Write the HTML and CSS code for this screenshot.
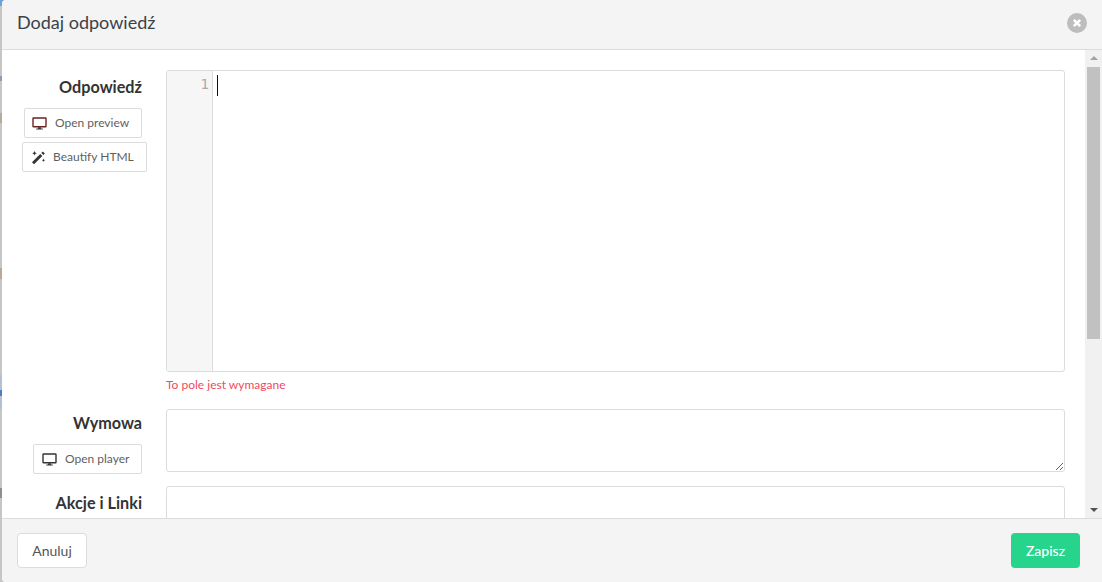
FILE: index.html
```html
<!DOCTYPE html>
<html lang="pl">
<head>
<meta charset="utf-8">
<title>Dodaj odpowiedź</title>
<link rel="stylesheet" href="styles.css">
</head>
<body>
<div class="modal">
  <header class="modal-head">
    <h1 class="modal-title">Dodaj odpowiedź</h1>
    <button class="close" aria-label="Zamknij">
      <svg width="20" height="20" viewBox="0 0 20 20"><circle cx="10" cy="10" r="10" fill="#bdbdbd"/><path d="M6.800 6.800l6.400 6.400M13.200 6.800l-6.400 6.400" stroke="#fff" stroke-width="2.600"/></svg>
    </button>
  </header>
  <div class="modal-main">
    <div class="modal-body">
      <div class="form-row row-answer">
        <div class="side">
          <label class="label">Odpowiedź</label>
          <button class="tool tool-preview">
            <svg class="ico" width="15" height="13" viewBox="0 0 16 14"><path d="M1.600 1h12.800a.6.6 0 0 1 .6.6v8.300a.6.6 0 0 1-.6.6H1.600a.6.6 0 0 1-.6-.6V1.600a.6.6 0 0 1 .6-.6z" fill="none" stroke="#6b2222" stroke-width="1.500"/><path d="M6.500 11h3v1.500h2V13.500H4.500V12.500h2z" fill="#333"/></svg>
            <span>Open preview</span>
          </button>
          <button class="tool tool-beautify">
            <svg class="ico" width="15" height="14" viewBox="0 0 15 14"><path d="M1 12.300L9.300 4l2 2L3 14.300z" fill="#333"/><path d="M10.300 3L11.800 1.500l2 2L12.300 5z" fill="#333"/><path d="M3.500 1l.7 1.600 1.600.7-1.600.7L3.500 5.600 2.800 4l-1.600-.7 1.600-.7zM12.500 8.500l.5 1.200 1.200.5-1.200.5-.5 1.200-.5-1.200-1.200-.5 1.200-.5z" fill="#333"/></svg>
            <span>Beautify HTML</span>
          </button>
        </div>
        <div class="field">
          <div class="editor">
            <div class="gutter">1</div>
            <div class="code"><span class="caret"></span></div>
          </div>
          <div class="error">To pole jest wymagane</div>
        </div>
      </div>
      <div class="form-row row-speech">
        <div class="side">
          <label class="label">Wymowa</label>
          <button class="tool tool-player">
            <svg class="ico" width="15" height="13" viewBox="0 0 16 14"><path d="M1.600 1h12.800a.6.6 0 0 1 .6.6v8.300a.6.6 0 0 1-.6.6H1.600a.6.6 0 0 1-.6-.6V1.600a.6.6 0 0 1 .6-.6z" fill="none" stroke="#333" stroke-width="1.500"/><path d="M6.500 11h3v1.500h2V13.500H4.500V12.500h2z" fill="#333"/></svg>
            <span>Open player</span>
          </button>
        </div>
        <div class="field">
          <textarea class="textarea"></textarea>
        </div>
      </div>
      <div class="form-row row-links">
        <div class="side">
          <label class="label">Akcje i Linki</label>
        </div>
        <div class="field">
          <div class="links-box"></div>
        </div>
      </div>
    </div>
    <div class="scrollbar">
      <div class="arrow-up"></div>
      <div class="track"><div class="thumb"></div></div>
      <div class="arrow-down"></div>
    </div>
  </div>
  <footer class="modal-foot">
    <button class="btn btn-cancel">Anuluj</button>
    <button class="btn btn-save">Zapisz</button>
  </footer>
</div>
</body>
</html>
```
FILE: styles.css
```css
* { box-sizing: border-box; }
html, body { margin: 0; height: 100%; overflow: hidden; }
body {
  background: linear-gradient(to bottom,
    #6fa3d8 0, #6fa3d8 6px, #c6c6c6 6px, #c6c6c6 76px,
    #8d9cb0 76px, #8d9cb0 81px, #c6c6c6 81px, #c6c6c6 113px,
    #b3aa98 113px, #b3aa98 123px, #c6c6c6 123px, #c6c6c6 268px,
    #b8a898 268px, #b8a898 279px, #c6c6c6 279px, #c6c6c6 375px,
    #b4bfd0 375px, #b4bfd0 390px, #4d7fc0 390px, #4d7fc0 396px,
    #b4bfd0 396px, #b4bfd0 409px, #c6c6c6 409px, #c6c6c6 488px,
    #8f8f8f 488px, #8f8f8f 498px, #c6c6c6 498px);
  font-family: "Lato", "Liberation Sans", sans-serif;
  color: #333;
  padding-left: 2px;
}
button { font-family: inherit; cursor: pointer; }
.modal {
  height: 582px;
  display: flex;
  flex-direction: column;
  background: #fff;
  border-radius: 4px 0 0 4px;
  overflow: hidden;
}
.modal-head {
  height: 50px;
  flex: none;
  background: #f4f4f4;
  border-bottom: 1px solid #dcdcdc;
  display: flex;
  align-items: center;
  justify-content: space-between;
  padding: 0 15px 3px 15px;
}
.modal-title {
  margin: 0 0 3px;
  font-size: 18px;
  font-weight: 400;
  color: #3a4248;
  line-height: 24px;
}
.close { border: 0; background: none; padding: 0; display: flex; }
.modal-main {
  flex: 1;
  min-height: 0;
  display: flex;
}
.modal-body {
  flex: 1;
  min-width: 0;
  padding: 20px 20px 0 20px;
  overflow: hidden;
}
.form-row { display: flex; }
.side {
  width: 120px;
  flex: none;
  display: flex;
  flex-direction: column;
  align-items: flex-end;
  margin-right: 24px;
}
.label {
  font-size: 16.2px;
  font-weight: 700;
  line-height: 20px;
  color: #333;
  margin-top: 7px;
}
.tool {
  height: 30px;
  display: flex;
  align-items: center;
  background: #fff;
  border: 1px solid #dcdcdc;
  border-radius: 2px;
  padding: 0;
  color: #5f5f5f;
  font-size: 12px;
  white-space: nowrap;
}
.tool span { position: relative; top: -1px; }
.ico { flex: none; }
.tool-preview { width: 118px; margin-top: 11px; padding-left: 7px; gap: 8px; }
.tool-beautify { width: 125px; margin-top: 4px; margin-right: -5px; padding-left: 8px; gap: 7px; }
.tool-player { width: 109px; margin-top: 11px; padding-left: 8px; gap: 8px; }
.field { flex: 1; min-width: 0; }
.editor {
  height: 302px;
  display: flex;
  border: 1px solid #dcdcdc;
  border-radius: 3px;
  overflow: hidden;
}
.gutter {
  width: 46px;
  flex: none;
  background: #f6f6f6;
  border-right: 1px solid #dcdcdc;
  text-align: right;
  padding: 4px 3px 0 0;
  font-family: "DejaVu Sans Mono", monospace;
  font-size: 14px;
  line-height: 18px;
  color: #aaa;
}
.code { flex: 1; padding: 4px 0 0 4px; }
.caret { display: block; width: 1px; height: 21px; background: #111; }
.error {
  font-size: 12px;
  line-height: 14px;
  color: #ef4a5f;
  margin-top: 6px;
}
.row-answer { height: 339px; }
.row-speech { height: 77px; }
.textarea {
  display: block;
  width: 100%;
  height: 63px;
  border: 1px solid #dcdcdc;
  border-radius: 3px;
  background: #fff;
  resize: vertical;
  outline: 0;
}
.row-speech .label { margin-top: 4px; }
.row-links .label { margin-top: 7px; }
.links-box {
  height: 60px;
  border: 1px solid #dcdcdc;
  border-radius: 3px;
}
.scrollbar {
  width: 17px;
  flex: none;
  background: #f1f1f1;
  display: flex;
  flex-direction: column;
  align-items: center;
}
.arrow-up, .arrow-down { width: 17px; height: 17px; flex: none; position: relative; }
.arrow-up::after, .arrow-down::after {
  content: "";
  position: absolute;
  left: 5px;
  width: 0; height: 0;
  border-left: 4px solid transparent;
  border-right: 4px solid transparent;
}
.arrow-up::after { top: 6px; border-bottom: 4px solid #a3a3a3; }
.arrow-down::after { top: 7px; border-top: 4px solid #505050; }
.track { flex: 1; width: 100%; }
.thumb { width: 13px; height: 272px; margin: 0 auto; background: #c1c1c1; }
.modal-foot {
  height: 64px;
  flex: none;
  background: #f4f4f4;
  border-top: 1px solid #dcdcdc;
  display: flex;
  align-items: center;
  justify-content: space-between;
  padding: 0 22px 0 15px;
}
.btn {
  height: 35px;
  border-radius: 4px;
  font-size: 14px;
}
.btn-cancel { width: 70px; background: #fff; border: 1px solid #dcdcdc; color: #555; }
.btn-save { width: 69px; background: #26d48c; border: 0; color: #fff; font-weight: 500; }
```
